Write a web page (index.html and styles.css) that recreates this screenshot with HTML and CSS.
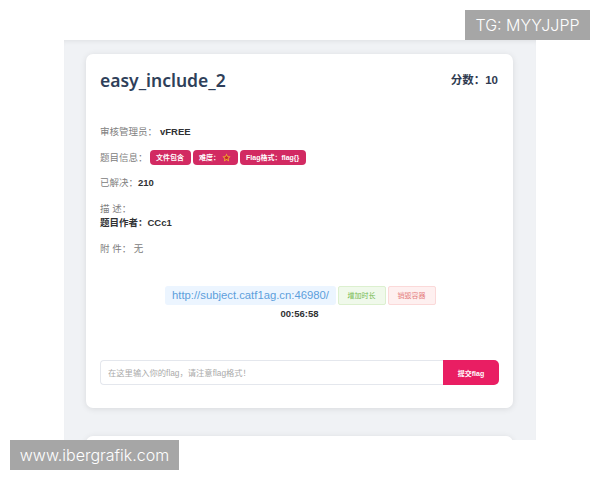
FILE: index.html
```html
<!DOCTYPE html>
<html lang="zh-CN">
<head>
    <meta charset="UTF-8">
    <meta name="viewport" content="width=device-width, initial-scale=1.0">
    <title>easy_include_2</title>
    <link rel="stylesheet" href="styles.css">
</head>
<body>
    <div class="panel">
        <div class="card">
            <div class="head">
                <h1>easy_include_2</h1>
                <div class="score">分数：10</div>
            </div>

            <div class="row row-admin"><span class="label">审核管理员：</span><strong class="admin">vFREE</strong></div>
            <div class="row row-tags">
                <span class="label">题目信息：</span>
                <span class="tag">文件包含</span>
                <span class="tag">难度：<svg class="star" viewBox="0 0 10 10"><path d="M5 .6l1.4 3 3.2.4-2.4 2.2.7 3.2L5 7.8 2.1 9.4l.7-3.2L.4 4l3.2-.4z" fill="#f0b030"/><path d="M5 2.6l.8 1.7 1.8.2-1.3 1.2.4 1.8L5 6.6l-1.7.9.4-1.8-1.3-1.2 1.8-.2z" fill="#c62828"/></svg></span>
                <span class="tag">Flag格式：flag{}</span>
            </div>
            <div class="row row-solved"><span class="label">已解决：</span><strong>210</strong></div>
            <div class="row row-desc">
                <div class="label">描 述：</div>
                <strong>题目作者：CCc1</strong>
            </div>
            <div class="row row-file"><span class="label">附 件：&nbsp;无</span></div>

            <div class="target">
                <div class="target-row">
                    <span class="url">http://subject.catf1ag.cn:46980/</span>
                    <span class="btn btn-green">增加时长</span>
                    <span class="btn btn-red">销毁容器</span>
                </div>
                <div class="timer">00:56:58</div>
            </div>

            <form class="flag-form">
                <input type="text" placeholder="在这里输入你的flag，请注意flag格式！">
                <button type="button">提交flag</button>
            </form>
        </div>
        <div class="card card-next"></div>
    </div>

    <div class="mark mark-tg">TG: MYYJJPP</div>
    <div class="mark mark-site">www.ibergrafik.com</div>
</body>
</html>
```

FILE: styles.css
```css
html, body {
    margin: 0;
    height: 480px;
    overflow: hidden;
    background: #fff;
}
body {
    font-family: "Liberation Sans", "Noto Sans CJK SC", sans-serif;
    font-size: 9.5px;
    color: #303133;
    padding-top: 40px;
    box-sizing: border-box;
}
.panel {
    width: 472px;
    height: 400px;
    margin-left: 64px;
    padding: 14px 23px 0 22px;
    box-sizing: border-box;
    overflow: hidden;
    background: #f0f2f5;
    box-shadow: inset 0 4px 5px -3px rgba(0,0,0,0.08);
}
.card {
    height: 354px;
    padding: 0 14px;
    box-sizing: border-box;
    background: #fff;
    border-radius: 7px;
    box-shadow: 0 1px 6px rgba(0,0,0,0.1);
}
.card-next {
    margin-top: 28px;
}
.head {
    display: flex;
    justify-content: space-between;
    padding-top: 12px;
    height: 60px;
    box-sizing: border-box;
}
h1 {
    margin: 0;
    font-family: "Noto Sans", sans-serif;
    font-size: 17.5px;
    line-height: 28px;
    font-weight: 600;
    color: #2f3f5a;
}
.score {
    margin: 1px 1px 0 0;
    font-size: 11.5px;
    font-weight: bold;
    line-height: 26px;
    color: #303b50;
}
.label {
    color: #808080;
}
.row {
    line-height: 14px;
}
.row strong {
    color: #303133;
}
.row-admin {
    margin-top: 11px;
}
.admin {
    margin-left: 3px;
}
.row-tags {
    display: flex;
    align-items: center;
    gap: 2px;
    height: 15px;
    margin-top: 11px;
}
.tag {
    display: flex;
    align-items: center;
    height: 15px;
    padding: 0 6.5px;
    border-radius: 4px;
    background: #d22a62;
    color: #fff;
    font-size: 7px;
    font-weight: bold;
}
.star {
    width: 9px;
    height: 9px;
    margin-left: 2px;
}
.row-solved {
    margin-top: 11px;
}
.row-desc {
    margin-top: 12px;
}
.row-desc strong {
    display: block;
}
.row-file {
    margin-top: 12px;
}
.target {
    margin-top: 30px;
    text-align: center;
}
.target-row {
    display: flex;
    justify-content: center;
    gap: 2px;
    padding-left: 2px;
}
.url {
    height: 19px;
    padding: 0 6.5px;
    line-height: 19px;
    font-size: 11.3px;
    color: #5d9fdc;
    background: #ecf5ff;
    border-radius: 3px;
}
.btn {
    height: 19px;
    width: 48px;
    box-sizing: border-box;
    line-height: 17px;
    font-size: 7px;
    border-radius: 2px;
}
.btn-green {
    color: #75b94f;
    background: #f0f9eb;
    border: 1px solid #dcf0cf;
}
.btn-red {
    color: #e58080;
    background: #fef0f0;
    border: 1px solid #fbd9d9;
}
.timer {
    margin-top: 3px;
    line-height: 12px;
    font-weight: bold;
}
.flag-form {
    display: flex;
    height: 25px;
    margin-top: 40px;
}
.flag-form input {
    flex: 1;
    min-width: 0;
    padding: 0 7px;
    border: 1px solid #e4e7ed;
    border-right: none;
    border-radius: 4px 0 0 4px;
    outline: none;
    font-family: inherit;
    font-size: 8.3px;
}
.flag-form input::placeholder {
    color: #aaa;
}
.flag-form button {
    width: 56px;
    padding: 0;
    border: none;
    border-radius: 0 5px 5px 0;
    background: #e91e63;
    color: #fff;
    font-family: inherit;
    font-size: 7px;
    font-weight: bold;
}
.mark {
    position: absolute;
    height: 30px;
    box-sizing: border-box;
    background: #a6a6a6;
    color: #fff;
    font-family: "Inter", "Liberation Sans", sans-serif;
    font-size: 16px;
    font-weight: 300;
    line-height: 30px;
    text-align: center;
}
.mark-tg {
    top: 10px;
    left: 465px;
    width: 125px;
}
.mark-site {
    top: 440px;
    left: 10px;
    width: 169px;
}
```
